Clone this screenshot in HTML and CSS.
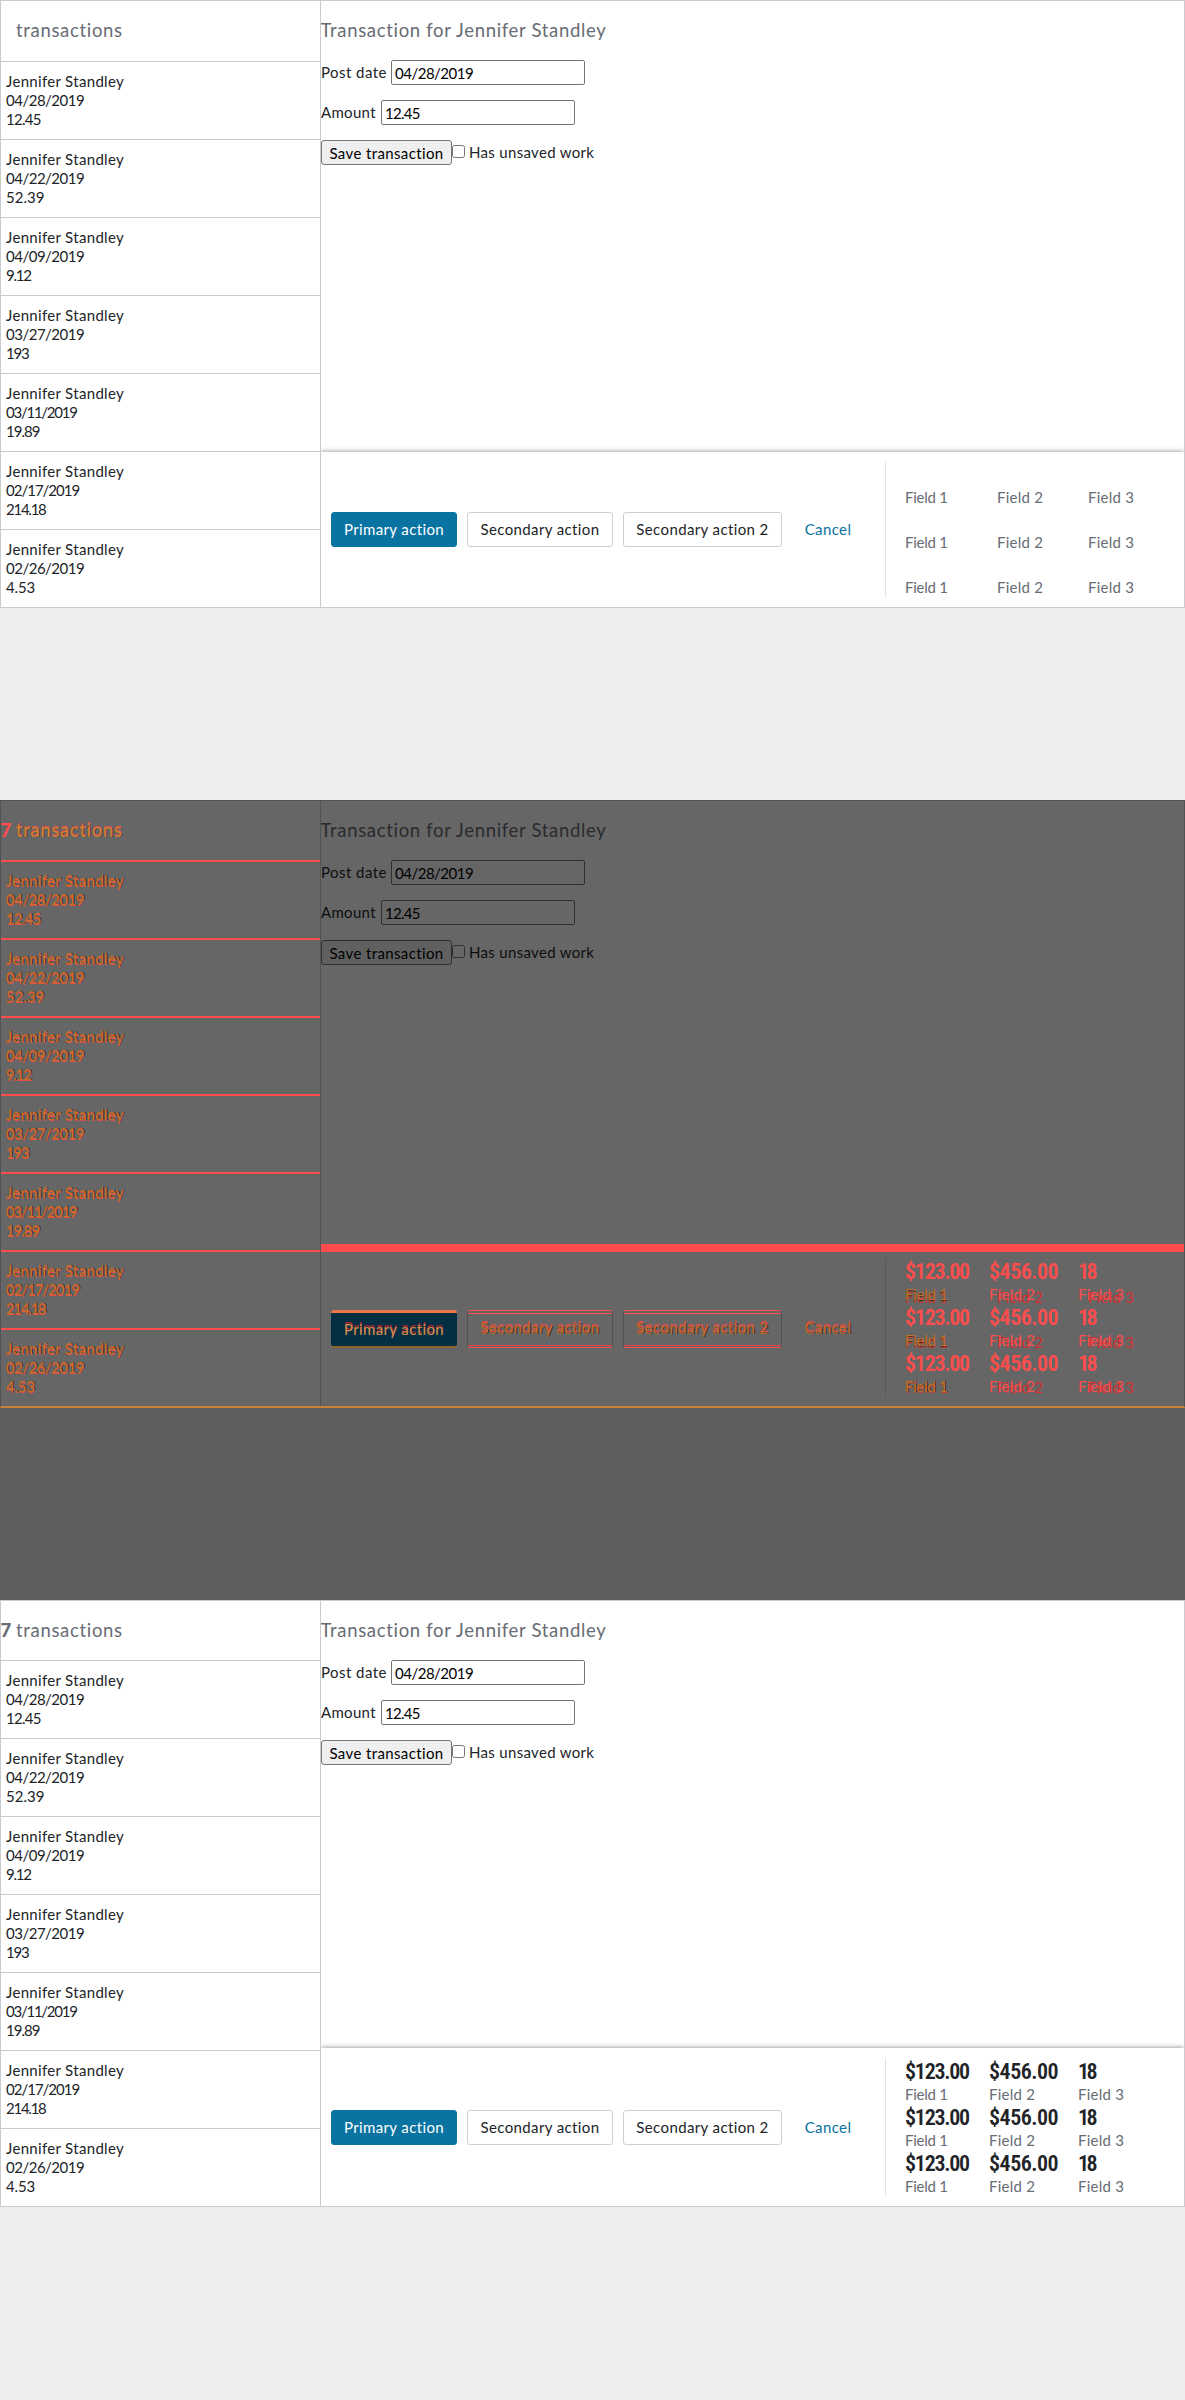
FILE: index.html
```
<!DOCTYPE html>
<html lang="en">
<head>
<meta charset="utf-8">
<title>Transactions</title>
<link rel="stylesheet" href="styles.css">
</head>
<body>
<section class="view before">
  <div class="split">
    <aside class="list">
      <h2 class="list-title"><b>&nbsp;</b><span>transactions</span></h2>
      <ul>
        <li><p>Jennifer Standley</p><p class="num k2">04/28/2019</p><p class="num k3">12.45</p></li>
        <li><p>Jennifer Standley</p><p class="num k2">04/22/2019</p><p class="num">52.39</p></li>
        <li><p>Jennifer Standley</p><p class="num k2">04/09/2019</p><p class="num k5">9.12</p></li>
        <li><p>Jennifer Standley</p><p class="num k2">03/27/2019</p><p class="num k5">193</p></li>
        <li><p>Jennifer Standley</p><p class="num k5">03/11/2019</p><p class="num k4">19.89</p></li>
        <li><p>Jennifer Standley</p><p class="num k4">02/17/2019</p><p class="num k5">214.18</p></li>
        <li><p>Jennifer Standley</p><p class="num k2">02/26/2019</p><p class="num k1">4.53</p></li>
      </ul>
    </aside>
    <main class="detail">
      <h2 class="detail-title">Transaction for Jennifer Standley</h2>
      <form class="form">
        <div class="row"><label class="date-label">Post date</label><input class="text k2" type="text" value="04/28/2019"></div>
        <div class="row"><label class="amount-label">Amount</label><input class="text k3" type="text" value="12.45"></div>
        <div class="row"><button class="save" type="button">Save transaction</button><input class="check" type="checkbox"><label>Has unsaved work</label></div>
      </form>
      <footer class="bar">
        <div class="actions">
          <button class="btn primary" type="button">Primary action</button>
          <button class="btn second" type="button">Secondary action</button>
          <button class="btn third" type="button">Secondary action 2</button>
          <button class="btn link" type="button">Cancel</button>
        </div>
        <div class="summary">
          <div class="cell"><span class="f1">Field 1</span></div><div class="cell"><span class="f2">Field 2</span></div><div class="cell"><span class="f3">Field 3</span></div>
          <div class="cell"><span class="f1">Field 1</span></div><div class="cell"><span class="f2">Field 2</span></div><div class="cell"><span class="f3">Field 3</span></div>
          <div class="cell"><span class="f1">Field 1</span></div><div class="cell"><span class="f2">Field 2</span></div><div class="cell"><span class="f3">Field 3</span></div>
        </div>
      </footer>
    </main>
  </div>
</section>
<section class="view diff">
  <div class="split">
    <aside class="list">
      <h2 class="list-title"><b>7</b><span>transactions</span></h2>
      <ul>
        <li><p>Jennifer Standley</p><p class="num k2">04/28/2019</p><p class="num k3">12.45</p></li>
        <li><p>Jennifer Standley</p><p class="num k2">04/22/2019</p><p class="num">52.39</p></li>
        <li><p>Jennifer Standley</p><p class="num k2">04/09/2019</p><p class="num k5">9.12</p></li>
        <li><p>Jennifer Standley</p><p class="num k2">03/27/2019</p><p class="num k5">193</p></li>
        <li><p>Jennifer Standley</p><p class="num k5">03/11/2019</p><p class="num k4">19.89</p></li>
        <li><p>Jennifer Standley</p><p class="num k4">02/17/2019</p><p class="num k5">214.18</p></li>
        <li><p>Jennifer Standley</p><p class="num k2">02/26/2019</p><p class="num k1">4.53</p></li>
      </ul>
    </aside>
    <main class="detail">
      <h2 class="detail-title">Transaction for Jennifer Standley</h2>
      <form class="form">
        <div class="row"><label class="date-label">Post date</label><input class="text k2" type="text" value="04/28/2019"></div>
        <div class="row"><label class="amount-label">Amount</label><input class="text k3" type="text" value="12.45"></div>
        <div class="row"><button class="save" type="button">Save transaction</button><input class="check" type="checkbox"><label>Has unsaved work</label></div>
      </form>
      <footer class="bar">
        <div class="actions">
          <button class="btn primary" type="button">Primary action</button>
          <button class="btn second" type="button">Secondary action</button>
          <button class="btn third" type="button">Secondary action 2</button>
          <button class="btn link" type="button">Cancel</button>
        </div>
        <div class="summary">
          <div class="cell"><strong class="v1">$123.00</strong><span class="f1 low3">Field 1</span></div><div class="cell"><strong class="v2">$456.00</strong><span class="f2 low3">Field 2</span></div><div class="cell"><strong class="v3">18</strong><span class="f3 low3">Field 3</span></div>
          <div class="cell"><strong class="v1">$123.00</strong><span class="f1 low2">Field 1</span></div><div class="cell"><strong class="v2">$456.00</strong><span class="f2 low2">Field 2</span></div><div class="cell"><strong class="v3">18</strong><span class="f3 low2">Field 3</span></div>
          <div class="cell"><strong class="v1">$123.00</strong><span class="f1 low1">Field 1</span></div><div class="cell"><strong class="v2">$456.00</strong><span class="f2 low1">Field 2</span></div><div class="cell"><strong class="v3">18</strong><span class="f3 low1">Field 3</span></div>
        </div>
      </footer>
    </main>
  </div>
</section>
<section class="view after">
  <div class="split">
    <aside class="list">
      <h2 class="list-title"><b>7</b><span>transactions</span></h2>
      <ul>
        <li><p>Jennifer Standley</p><p class="num k2">04/28/2019</p><p class="num k3">12.45</p></li>
        <li><p>Jennifer Standley</p><p class="num k2">04/22/2019</p><p class="num">52.39</p></li>
        <li><p>Jennifer Standley</p><p class="num k2">04/09/2019</p><p class="num k5">9.12</p></li>
        <li><p>Jennifer Standley</p><p class="num k2">03/27/2019</p><p class="num k5">193</p></li>
        <li><p>Jennifer Standley</p><p class="num k5">03/11/2019</p><p class="num k4">19.89</p></li>
        <li><p>Jennifer Standley</p><p class="num k4">02/17/2019</p><p class="num k5">214.18</p></li>
        <li><p>Jennifer Standley</p><p class="num k2">02/26/2019</p><p class="num k1">4.53</p></li>
      </ul>
    </aside>
    <main class="detail">
      <h2 class="detail-title">Transaction for Jennifer Standley</h2>
      <form class="form">
        <div class="row"><label class="date-label">Post date</label><input class="text k2" type="text" value="04/28/2019"></div>
        <div class="row"><label class="amount-label">Amount</label><input class="text k3" type="text" value="12.45"></div>
        <div class="row"><button class="save" type="button">Save transaction</button><input class="check" type="checkbox"><label>Has unsaved work</label></div>
      </form>
      <footer class="bar">
        <div class="actions">
          <button class="btn primary" type="button">Primary action</button>
          <button class="btn second" type="button">Secondary action</button>
          <button class="btn third" type="button">Secondary action 2</button>
          <button class="btn link" type="button">Cancel</button>
        </div>
        <div class="summary">
          <div class="cell"><strong class="v1">$123.00</strong><span class="f1">Field 1</span></div><div class="cell"><strong class="v2">$456.00</strong><span class="f2">Field 2</span></div><div class="cell"><strong class="v3">18</strong><span class="f3">Field 3</span></div>
          <div class="cell"><strong class="v1">$123.00</strong><span class="f1">Field 1</span></div><div class="cell"><strong class="v2">$456.00</strong><span class="f2">Field 2</span></div><div class="cell"><strong class="v3">18</strong><span class="f3">Field 3</span></div>
          <div class="cell"><strong class="v1">$123.00</strong><span class="f1">Field 1</span></div><div class="cell"><strong class="v2">$456.00</strong><span class="f2">Field 2</span></div><div class="cell"><strong class="v3">18</strong><span class="f3">Field 3</span></div>
        </div>
      </footer>
    </main>
  </div>
</section>
</body>
</html>
```
FILE: styles.css
```
* { box-sizing: border-box; }

body {
  margin: 0;
  font: 15px/19px Lato, sans-serif;
  letter-spacing: .32px;
  color: #212327;
  background: #eee;
}

h2, p, ul { margin: 0; padding: 0; font-weight: 400; }
ul { list-style: none; }

.view {
  --line: #cacbcf;
  --head: 60px;
  height: 800px;
  background: #eee;
}

.split {
  display: flex;
  height: 608px;
  border: 1px solid var(--line);
  background: #fff;
}

.list { width: 320px; border-right: 1px solid var(--line); }

.list-title, .detail-title {
  padding-top: 17px;
  font-size: 18.5px;
  line-height: 24px;
  letter-spacing: .67px;
  color: #686c73;
}
.list-title { display: flex; height: var(--head); }
.list-title b { width: 15.5px; margin-left: -.5px; font-weight: 900; }

.list li {
  height: 78px;
  padding: 10px 5px;
  border-top: 1px solid var(--line);
}

.num { letter-spacing: 0; }
.k1 { letter-spacing: -.15px; }
.k2 { letter-spacing: -.5px; }
.k3 { letter-spacing: -.75px; }
.k4 { letter-spacing: -1px; }
.k5 { letter-spacing: -1.25px; }

.detail {
  display: flex;
  flex-direction: column;
  flex: 1;
  overflow: hidden;
}
.detail-title { height: 59px; margin-left: -.5px; }

.form { display: flex; flex-direction: column; gap: 15px; }
.row { display: flex; height: 25px; line-height: 25px; }
.date-label { width: 70px; letter-spacing: .45px; }
.amount-label { width: 60px; }

.text, .save {
  border: 1px solid #767676;
  border-radius: 2px;
  font-family: inherit;
  font-size: 15px;
  color: #000;
}
.text { width: 194px; padding: 0 3px; background: #fff; }
.save {
  width: 131px;
  padding: 0;
  border-radius: 3px;
  background: #efefef;
  letter-spacing: .38px;
}
.check { width: 13px; height: 13px; margin: 5px 4px 0 0; }

.bar {
  display: flex;
  margin-top: auto;
  padding: 10px;
  background: #fff;
  box-shadow: 0 0 5px rgba(0, 0, 0, .5);
}
.actions { display: flex; flex: 1; gap: 10px; align-items: center; }

.btn {
  height: 35px;
  padding: 0;
  border: 1px solid #cdcfd2;
  border-radius: 3px;
  background: #fff;
  color: #212327;
  font: 15px/33px Lato, sans-serif;
  letter-spacing: .38px;
}
.primary { width: 126px; border-color: #0974a1; background: #0974a1; color: #fff; }
.second { width: 146px; }
.third { width: 159px; }
.link { width: 72px; border-color: transparent; background: none; color: #0974a1; }

.summary {
  display: grid;
  grid-template-columns: 92px 91px 1fr;
  grid-auto-rows: 45px;
  width: 289px;
  padding-left: 19px;
  border-left: 1px solid #e2e3e4;
}
.cell { display: flex; flex-direction: column; justify-content: flex-end; white-space: nowrap; }
.cell span { color: #686c73; letter-spacing: .25px; }
.cell .f1 { letter-spacing: -.25px; }
.cell strong { font: 600 22px/26px "Roboto Condensed", Roboto, sans-serif; }
.cell .v1 { letter-spacing: -1.25px; }
.cell .v2 { letter-spacing: -.5px; }
.cell .v3 { letter-spacing: -2.5px; }

.after, .diff { --head: 59px; }
.after .split { height: 607px; }
.after .summary, .diff .summary { grid-template-columns: 84px 89px 1fr; grid-auto-rows: 46px; }

/* Difference view: removed pixels red, shifted pixels orange */
.diff {
  --line: #525252;
  background: #5f5f5f;
}
.diff .split { background: #666; border-bottom: 2px solid #c88239; }
.diff .list li { border-top: 2px solid #ff4d4d; padding-top: 9px; }
.diff .list-title { color: #c88239; text-shadow: 0 -1px #f14d48, 1px 0 #45362a; }
.diff .list-title b { color: #ff4d4d; text-shadow: none; }
.diff .list p { color: #bf742c; text-shadow: 0 1px #ec4a44, 1px 0 #222120; }
.diff .detail-title { color: #2a2b2e; }
.diff .form { color: #0d0e10; }
.diff .text, .diff .save { border-color: #2f2f2f; background: #666; }
.diff .save { background: #606060; }
.diff .check {
  appearance: none;
  border: 1px solid #2f2f2f;
  border-radius: 2.5px;
}
.diff .bar {
  margin-top: auto;
  background: #666;
  box-shadow: none;
  border-top: 8px solid #ff4d4d;
  padding-top: 6px;
}
.diff .btn {
  height: 38px;
  margin-top: 3px;
  border-color: #ff4d4d #525252;
  background: linear-gradient(#ff4d4d, #ff4d4d) 0 2px / 100% 1px no-repeat, linear-gradient(#e34542, #e34542) 0 34px / 100% 1px no-repeat;
  color: #b3702f;
  text-shadow: 0 -2px #f04844, 1px 0 #2a2320;
}
.diff .primary {
  border: solid;
  border-width: 3px 0 2px;
  border-color: #ef7a48 transparent #8d652f;
  background: #042f42;
  color: #c9934f;
  text-shadow: 0 -2px #b52535;
}
.diff .link { border: 0; background: none; }
.diff .summary { border-left-color: #5a5a5a; }
.diff .cell strong { color: #ff4d4d; }
.diff .cell span { color: #ff4d4d; }
.diff .cell .f1 { color: #bf742c; }
.diff .low3 { text-shadow: 0 3px #c43a2c, 0 1px #2a2320; }
.diff .low2 { text-shadow: 0 2px #c43a2c, 0 1px #2a2320; }
.diff .low1 { text-shadow: 0 1px #c43a2c, 1px 0 #2a2320; }
.diff .f2.low3 { text-shadow: 8px 3px #d52f2f; }
.diff .f2.low2 { text-shadow: 8px 2px #d52f2f; }
.diff .f2.low1 { text-shadow: 8px 1px #d52f2f; }
.diff .f3.low3 { text-shadow: 10px 3px #d52f2f; }
.diff .f3.low2 { text-shadow: 10px 2px #d52f2f; }
.diff .f3.low1 { text-shadow: 10px 1px #d52f2f; }
```
